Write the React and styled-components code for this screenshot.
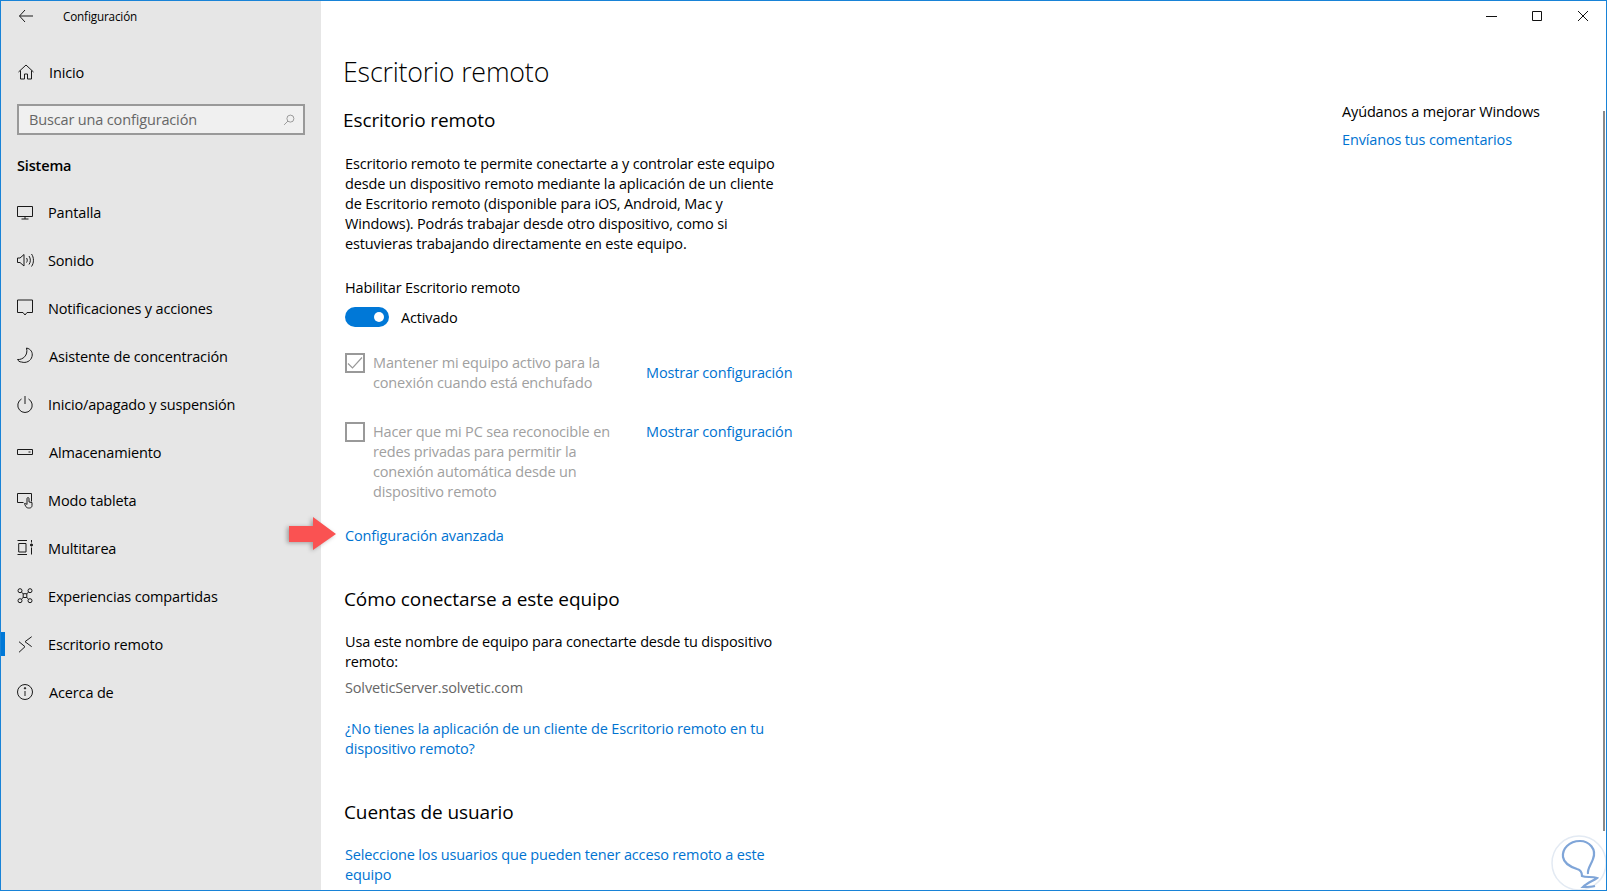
import styled, { createGlobalStyle } from "styled-components";

const GlobalStyle = createGlobalStyle`
  html, body {
    margin: 0;
    padding: 0;
    background: #ffffff;
  }
  body {
    font-family: "Open Sans", "Noto Sans", "Liberation Sans", sans-serif;
    font-size: 14.5px;
    color: #000000;
    letter-spacing: -0.15px;
  }
`;

const menu = [
  { label: "Pantalla", icon: "display" },
  { label: "Sonido", icon: "sound" },
  { label: "Notificaciones y acciones", icon: "note" },
  { label: "Asistente de concentración", icon: "moon", shift: true },
  { label: "Inicio/apagado y suspensión", icon: "power" },
  { label: "Almacenamiento", icon: "storage", shift: true },
  { label: "Modo tableta", icon: "tablet" },
  { label: "Multitarea", icon: "multi" },
  { label: "Experiencias compartidas", icon: "shared" },
  { label: "Escritorio remoto", icon: "remote", active: true },
  { label: "Acerca de", icon: "info", shift: true },
];

const glyphs = {
  back: <path d="M10 4 4.500 10l5.500 6M4.500 10H18" />,
  home: <path d="M2.500 10 10 3l7.500 7M4.500 8.500V17h4v-5h3v5h4V8.500" />,
  search: (
    <>
      <circle cx="12" cy="8" r="5" />
      <path d="M8.500 11.500 3 17" />
    </>
  ),
  display: <path d="M2.500 4.500h15v10h-15zM10 14.500v2.500M6.500 17h7" />,
  sound: (
    <>
      <path d="M2.500 8v4.500h2.500l4 3.500V4.500L5 8z" />
      <path d="M11.500 8c1 1.300 1 3.200 0 4.500M14 6c1.800 2.500 1.800 6 0 8.500M16.500 4c2.600 3.500 2.600 9 0 12.500" />
    </>
  ),
  note: <path d="M2.500 2h15v12.500H12L10 17l-2-2.500H2.500z" />,
  moon: <path d="M11.500 2c4.500 1 6.500 4.500 5.500 8.500-1 4.500-6 7-10.500 5.500C4.500 16 3.200 14.800 2.500 13.500c5 .5 11-4 9-11.500z" />,
  power: (
    <>
      <path d="M10 2v8" />
      <path d="M6.500 5a7.200 7.200 0 1 0 7 0" />
    </>
  ),
  storage: <path d="M2.500 7.500h15v5h-15zM13.500 10h2" />,
  tablet: (
    <>
      <path d="M8.500 12.500h-6v-9h14v8" />
      <path d="M12 14.500V8.500c0-1.200 2-1.200 2 0V12l3 .5v3c0 1.500-1 2.500-2.500 2.500h-1c-1.500 0-2.500-1-3-2l-1-2.500c.5-.5 1.500 0 2.500 1z" />
    </>
  ),
  multi: (
    <>
      <path d="M2.500 2.500h9.500M2.500 16.500h9.500M3.700 5.500H11v8.500H3.700zM16.500 2v2.500M16.500 9.500V16.500" />
      <circle cx="16.500" cy="7" r="1.100" fill="currentColor" />
    </>
  ),
  shared: (
    <>
      <circle cx="5" cy="4.700" r="2" />
      <circle cx="15" cy="4.700" r="2" />
      <circle cx="5" cy="14.700" r="2" />
      <circle cx="15" cy="14.700" r="2" />
      <path d="M8.200 7.700h3.600v3.800H8.200zM6.400 6.200l1.800 1.500M13.600 6.200l-1.800 1.500M6.400 13.200l1.800-1.700M13.600 13.200l-1.800-1.700" />
    </>
  ),
  remote: <path d="M4 7.700 10 12.700 4 18.300M16.700 2.700 10 7.700l6.700 5" />,
  info: (
    <>
      <circle cx="10" cy="10" r="7.500" />
      <path d="M10 9v5" />
      <circle cx="10" cy="6.300" r=".7" fill="currentColor" />
    </>
  ),
};

export default function App() {
  return (
    <Window>
      <GlobalStyle />
      <Sidebar>
        <TitleRow>
          <BackButton>
            <Glyph name="back" />
          </BackButton>
          <AppTitle>Configuración</AppTitle>
        </TitleRow>
        <HomeRow>
          <Glyph name="home" />
          <span>Inicio</span>
        </HomeRow>
        <SearchBox>
          <span>Buscar una configuración</span>
          <SearchIcon>
            <Glyph name="search" />
          </SearchIcon>
        </SearchBox>
        <SectionLabel>Sistema</SectionLabel>
        <Nav>
          {menu.map((item) => (
            <NavItem key={item.label} $active={item.active}>
              <Glyph name={item.icon} />
              <NavLabel $shift={item.shift}>{item.label}</NavLabel>
            </NavItem>
          ))}
        </Nav>
      </Sidebar>

      <Main>
        <Content>
          <PageTitle>Escritorio remoto</PageTitle>
          <FirstHeading>Escritorio remoto</FirstHeading>
          <Paragraph $top={20}>
            Escritorio remoto te permite conectarte a y controlar este equipo
            desde un dispositivo remoto mediante la aplicación de un cliente de
            Escritorio remoto (disponible para iOS, Android, Mac y Windows).
            Podrás trabajar desde otro dispositivo, como si estuvieras
            trabajando directamente en este equipo.
          </Paragraph>
          <ToggleLabel>Habilitar Escritorio remoto</ToggleLabel>
          <ToggleRow>
            <Toggle />
            <span>Activado</span>
          </ToggleRow>
          <OptionRow>
            <Checkbox>
              <svg width="16" height="16" viewBox="0 0 16 16" fill="none" stroke="#999" strokeWidth="1.2">
                <path d="M1 8.500 5.500 13 15 2.500" />
              </svg>
            </Checkbox>
            <OptionText>
              Mantener mi equipo activo para la conexión cuando está enchufado
            </OptionText>
            <OptionLink $top={10}>Mostrar configuración</OptionLink>
          </OptionRow>
          <OptionRow $gap={29}>
            <Checkbox />
            <OptionText>
              Hacer que mi PC sea reconocible en redes privadas para permitir la
              conexión automática desde un dispositivo remoto
            </OptionText>
            <OptionLink>Mostrar configuración</OptionLink>
          </OptionRow>
          <AdvancedRow>
            <Arrow width="47" height="33" viewBox="0 0 47 33">
              <path d="M0 9h24V0l23 17-23 16v-8H0z" />
            </Arrow>
            <Link>Configuración avanzada</Link>
          </AdvancedRow>

          <Heading>Cómo conectarse a este equipo</Heading>
          <Paragraph>
            Usa este nombre de equipo para conectarte desde tu dispositivo
            remoto:
          </Paragraph>
          <ServerName>SolveticServer.solvetic.com</ServerName>
          <BlockLink>
            ¿No tienes la aplicación de un cliente de Escritorio remoto en tu
            dispositivo remoto?
          </BlockLink>

          <Heading $top={39}>Cuentas de usuario</Heading>
          <BlockLink $top={19}>
            Seleccione los usuarios que pueden tener acceso remoto a este equipo
          </BlockLink>
        </Content>

        <Aside>
          <WindowControls>
            <svg width="14" height="14" viewBox="0 0 14 14" stroke="#111" fill="none">
              <path d="M2 7.500h11" />
            </svg>
            <svg width="14" height="14" viewBox="0 0 14 14" stroke="#111" fill="none">
              <path d="M2.500 2.500h9v9h-9z" />
            </svg>
            <svg width="14" height="14" viewBox="0 0 14 14" stroke="#111" fill="none">
              <path d="M2 2l10 10M12 2 2 12" />
            </svg>
          </WindowControls>
          <HelpBlock>
            <span>Ayúdanos a mejorar Windows</span>
            <Link>Envíanos tus comentarios</Link>
          </HelpBlock>
        </Aside>

        <Scrollbar />
      </Main>

      <Watermark width="60" height="60" viewBox="0 0 60 60">
        <circle cx="29" cy="30" r="27" fill="#fff" stroke="#e3eaf3" strokeWidth="1.500" />
        <path
          d="M38 41C37 36 41 32 43 26C47 16 39 8 30 8C19 8 12 16 13 24C14 31 21 34 27 36C31 37 32 40 32 43C36 45 42 43 47 45C43 48 37 50 33 54C37 54 41 54 45 53"
          fill="none"
          stroke="#7fa5d8"
          strokeWidth="2.200"
        />
      </Watermark>
    </Window>
  );
}

function Glyph({ name }) {
  return (
    <Svg viewBox="0 0 20 20" fill="none" stroke="currentColor" strokeWidth="1">
      {glyphs[name]}
    </Svg>
  );
}

const Window = styled.div`
  width: 1607px;
  height: 891px;
  box-sizing: border-box;
  border: 1px solid #1883d7;
  display: flex;
  overflow: hidden;
  position: relative;
  background: #ffffff;
`;

const Svg = styled.svg`
  width: 20px;
  height: 20px;
  flex-shrink: 0;
  color: #1a1a1a;
`;

const Sidebar = styled.aside`
  width: 320px;
  flex-shrink: 0;
  background: #e6e6e6;
  display: flex;
  flex-direction: column;
`;

const TitleRow = styled.div`
  display: flex;
  align-items: center;
  height: 30px;
`;

const BackButton = styled.div`
  width: 62px;
  padding-left: 14px;
  box-sizing: border-box;
  display: flex;
`;

const AppTitle = styled.span`
  font-size: 11.7px;
`;

const HomeRow = styled.div`
  display: flex;
  align-items: center;
  gap: 13px;
  height: 32px;
  margin-top: 25px;
  padding-left: 15px;
`;

const SearchBox = styled.div`
  height: 31px;
  width: 288px;
  box-sizing: border-box;
  margin: 16px 0 0 16px;
  padding: 0 7px 0 10px;
  border: 2px solid #999999;
  background: #f0f0f0;
  color: #666666;
  display: flex;
  align-items: center;
  justify-content: space-between;
`;

const SearchIcon = styled.span`
  display: flex;
  svg {
    width: 14px;
    height: 14px;
    color: #777777;
  }
`;

const SectionLabel = styled.div`
  font-weight: 600;
  margin: 20px 0 0 16px;
  height: 22px;
  line-height: 22px;
`;

const Nav = styled.nav`
  display: flex;
  flex-direction: column;
  margin-top: 11px;
`;

const NavItem = styled.div`
  height: 48px;
  display: flex;
  align-items: center;
  gap: 13px;
  padding-left: 14px;
  position: relative;

  &::before {
    content: "";
    display: ${(props) => (props.$active ? "block" : "none")};
    position: absolute;
    left: 0;
    top: 12px;
    width: 4px;
    height: 24px;
    background: #0078d7;
  }
`;

const NavLabel = styled.span`
  margin-left: ${(props) => (props.$shift ? "1px" : "0")};
`;

const Main = styled.main`
  flex: 1;
  display: flex;
  justify-content: space-between;
  position: relative;
`;

const Content = styled.div`
  width: 460px;
  margin-left: 22px;
`;

const PageTitle = styled.h1`
  font-size: 26.8px;
  font-weight: 300;
  line-height: 36px;
  margin: 53px 0 0;
  letter-spacing: -0.2px;
`;

const Heading = styled.h2`
  font-size: 19px;
  font-weight: 400;
  line-height: 28px;
  margin: ${(props) => props.$top || 39}px 0 0 1px;
  letter-spacing: -0.1px;
`;

const FirstHeading = styled(Heading)`
  margin: 16px 0 0 0;
`;

const Paragraph = styled.p`
  margin: ${(props) => props.$top || 19}px 0 0 2px;
  width: 430px;
  line-height: 20px;
`;

const ToggleLabel = styled.div`
  margin: 24px 0 0 2px;
  line-height: 20px;
`;

const ToggleRow = styled.div`
  display: flex;
  align-items: center;
  gap: 12px;
  margin: 9px 0 0 2px;
`;

const Toggle = styled.div`
  width: 44px;
  height: 20px;
  border-radius: 10px;
  background: #0078d7;
  position: relative;

  &::after {
    content: "";
    position: absolute;
    right: 5px;
    top: 5px;
    width: 10px;
    height: 10px;
    border-radius: 50%;
    background: #ffffff;
  }
`;

const OptionRow = styled.div`
  display: flex;
  margin: ${(props) => props.$gap || 26}px 0 0 2px;
`;

const Checkbox = styled.div`
  width: 20px;
  height: 20px;
  box-sizing: border-box;
  border: 2px solid #999999;
  flex-shrink: 0;
  display: flex;
  align-items: center;
  justify-content: center;
`;

const OptionText = styled.div`
  width: 245px;
  margin-left: 8px;
  color: #a0a0a0;
  line-height: 20px;
  flex-shrink: 0;
`;

const Link = styled.span`
  color: #0073d1;
  line-height: 20px;
`;

const OptionLink = styled(Link)`
  margin: ${(props) => props.$top || 0}px 0 0 28px;
  white-space: nowrap;
`;

const AdvancedRow = styled.div`
  margin: 24px 0 0 2px;
  position: relative;
  height: 20px;
`;

const Arrow = styled.svg`
  position: absolute;
  left: -56px;
  top: -9px;
  filter: drop-shadow(-2px 1px 2px rgba(0, 0, 0, 0.3));

  path {
    fill: #fa5252;
  }
`;

const ServerName = styled.div`
  margin: 6px 0 0 2px;
  color: #666666;
  line-height: 20px;
`;

const BlockLink = styled(Link)`
  display: block;
  width: 430px;
  margin: ${(props) => props.$top || 21}px 0 0 2px;
`;

const Aside = styled.div`
  width: 264px;
  flex-shrink: 0;
  display: flex;
  flex-direction: column;
`;

const WindowControls = styled.div`
  display: flex;
  justify-content: flex-end;
  gap: 32px;
  padding: 8px 16px 0 0;
`;

const HelpBlock = styled.div`
  display: flex;
  flex-direction: column;
  gap: 8px;
  margin-top: 79px;
  line-height: 20px;
`;

const Scrollbar = styled.div`
  position: absolute;
  right: 1px;
  top: 110px;
  width: 2px;
  height: 720px;
  background: #8a8a8a;
`;

const Watermark = styled.svg`
  position: absolute;
  right: -4px;
  bottom: -3px;
`;
